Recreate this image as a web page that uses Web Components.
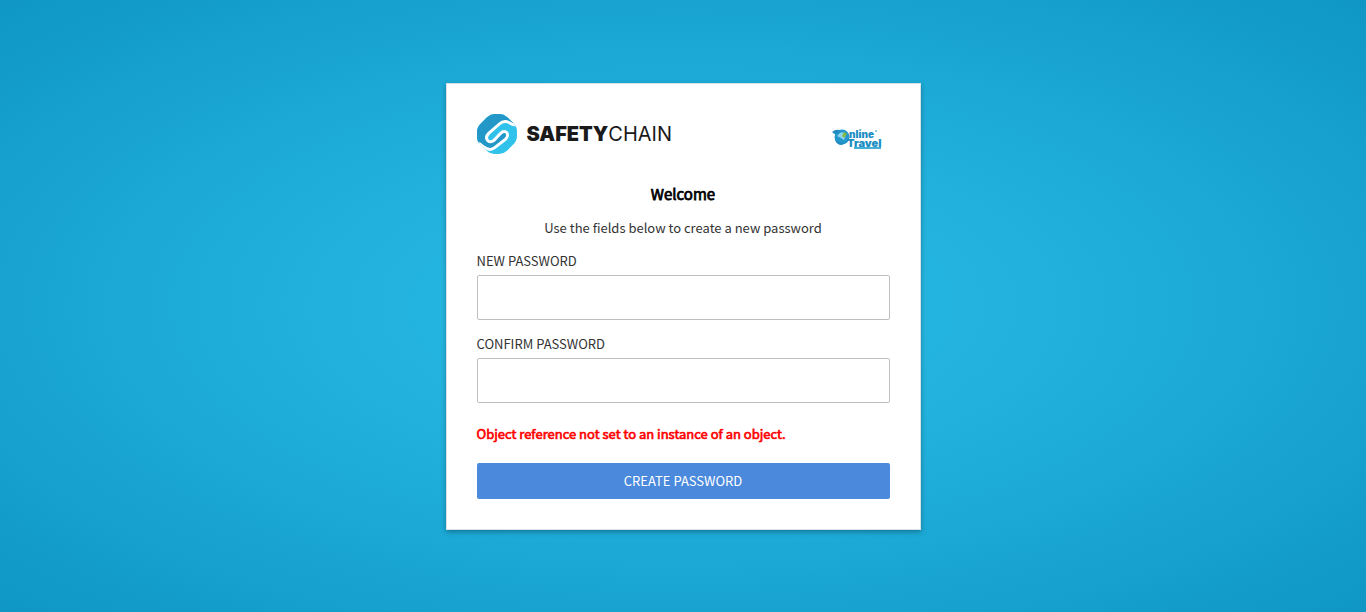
<!DOCTYPE html>
<html lang="en">
<head>
<meta charset="utf-8">
<meta name="viewport" content="width=device-width, initial-scale=1">
<title>SafetyChain - Create Password</title>
<style>
body { margin: 0; font-family: "Noto Sans CJK SC", "Noto Sans", sans-serif; font-size: 13px; line-height: 20px; color: #333; }
</style>
</head>
<body>
<password-page></password-page>
<script>
const define = (name, html, setup) => customElements.define(name, class extends HTMLElement {
  constructor() {
    super();
    const t = document.createElement('template');
    t.innerHTML = html;
    this.attachShadow({ mode: 'open' }).append(t.content.cloneNode(true));
  }
  connectedCallback() { if (setup) setup(this); }
});

define('safety-chain-logo', `
<style>
:host { display: flex; align-items: center; gap: 10px; height: 40px; color: #1a1a1a; font: 400 20px/40px Inter, sans-serif; }
svg { width: 40px; height: 40px; }
b { font-weight: 900; }
</style>
<svg viewBox="0 0 120 120" aria-hidden="true">
  <clipPath id="c"><path d="M54 0H68Q80 0 90 9L110 28Q120 38 120 52V66Q120 80 110 90L90 110Q79 120 66 120H52Q40 120 30 111L10 92Q0 82 0 68V54Q0 40 10 30L30 10Q41 0 54 0Z"/></clipPath>
  <g clip-path="url(#c)">
    <path fill="#30c2ea" d="M0 0H120V120H0Z"/>
    <path fill="#2397c7" stroke="#fff" stroke-width="9" d="M-10 -10H110L120 30C112 34 106 32 100 28C89 21 77 21 67 30L35 58C20 73 36 92 51 79L71 58C86 43 100 62 85 76L53 101C43 109 31 107 20 99C14 94 10 88 0 88L-10 88Z"/>
  </g>
</svg>
<span><b>SAFETY</b>CHAIN</span>`);

define('online-travel-logo', `
<style>
:host { display: block; width: 50px; height: 22px; }
svg { display: block; width: 50px; height: 22px; overflow: visible; }
text { font-family: Inter, sans-serif; font-weight: 900; fill: #1c8ec3; }
.top { font-size: 10px; }
.bottom { font-size: 11px; }
</style>
<svg viewBox="0 0 50 22" role="img" aria-label="Online Travel">
  <circle cx="10" cy="9" r="7.5" fill="#2498cd"/>
  <path d="M0 4Q5 0 8 3L5 6Q3 7 0 4ZM3 11Q6 15 13 14L10 17Q4 17 3 11Z" fill="#208cc1"/>
  <path d="M8 5Q12 3 14 7L12 12L9 10L5 8Z" fill="#8ed5ed"/>
  <path d="M12 4L15 6L12 10L10 8Z" fill="#86b842"/>
  <path d="M22 20H49" stroke="#46afd5" stroke-width="2"/>
  <text class="top" x="17" y="10">nline</text><text class="bottom" x="15" y="19">Travel</text>
  <circle cx="44" cy="3" r="1" fill="#67bad9"/>
</svg>`);

define('password-field', `
<style>
:host { display: block; }
label { display: block; margin-bottom: 4px; }
input { display: block; box-sizing: border-box; width: 100%; height: 45px; padding: 0 12px; border: 1px solid #bfbfbf; border-radius: 2px; background: #fff; font: inherit; outline: none; }
</style>
<label for="pw"></label><input id="pw" type="password">`,
el => { el.shadowRoot.querySelector('label').textContent = el.getAttribute('label'); });

define('action-button', `
<style>
:host { display: block; }
button { display: block; width: 100%; height: 36px; padding: 0; border: 0; border-radius: 2px; background: #4a89dc; color: #fff; font: inherit; cursor: pointer; }
</style>
<button type="button"><slot></slot></button>`);

define('login-card', `
<style>
:host { display: block; box-sizing: border-box; width: 100%; max-width: 475px; padding: 30px; border: 1px solid #d8e2e6; background: #fff; box-shadow: 0 2px 5px rgba(0,0,0,.3); }
header { display: flex; justify-content: space-between; align-items: center; padding-right: 8px; margin-bottom: 28px; }
online-travel-logo { margin-top: 11px; }
h1 { margin: 0 0 12px; font-size: 15px; line-height: 24px; font-weight: 400; color: #000; text-align: center; }
h1, .error { -webkit-text-stroke: 0.05em currentColor; }
p { margin: 0; }
.intro { text-align: center; margin-bottom: 13px; }
password-field { margin-bottom: 14px; }
.error { margin: 21px 0 19px; color: #f00; }
</style>
<header><safety-chain-logo></safety-chain-logo><online-travel-logo></online-travel-logo></header>
<h1>Welcome</h1>
<p class="intro">Use the fields below to create a new password</p>
<password-field label="NEW PASSWORD"></password-field>
<password-field label="CONFIRM PASSWORD"></password-field>
<p class="error" role="alert">Object reference not set to an instance of an object.</p>
<action-button>CREATE PASSWORD</action-button>`);

define('password-page', `
<style>
:host { display: flex; box-sizing: border-box; align-items: center; justify-content: center; min-height: 100vh; background: radial-gradient(ellipse farthest-corner at center, #2bbfe7 0%, #1ba8d5 60%, #0f96c4 100%); }
</style>
<login-card></login-card>`);
</script>
</body>
</html>
